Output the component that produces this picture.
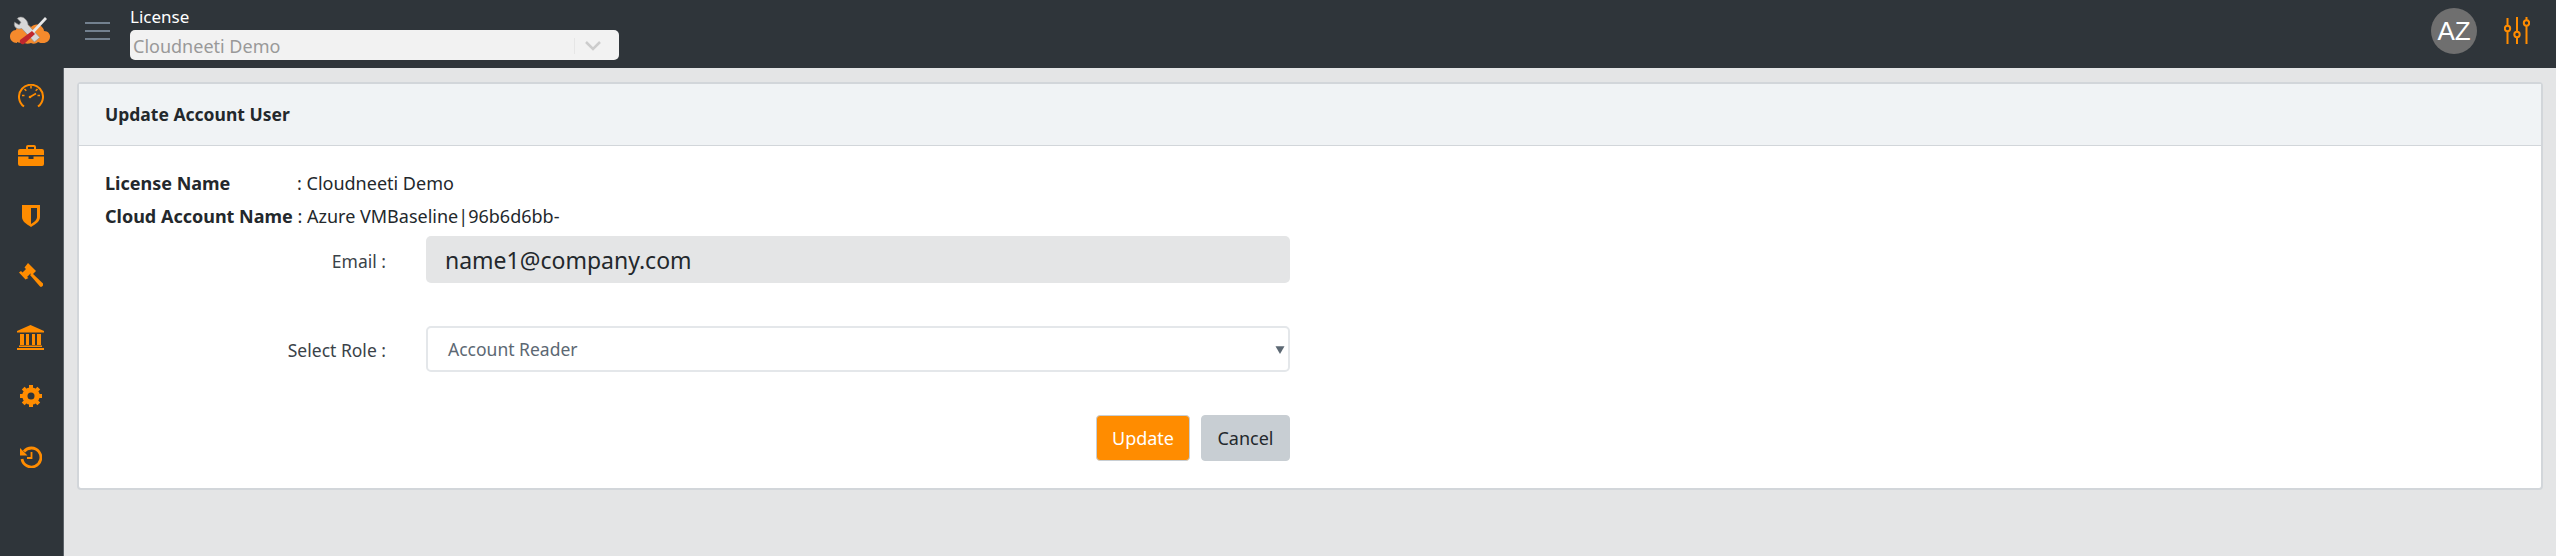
<div class="shell">
  <header class="topbar">
    <div class="brand">
      <svg width="42" height="30" viewBox="0 0 42 30">
        <path d="M8 27c-4.500 0-7-3-7-6.500S3.500 14 7 14c1-4 4-6 8-6 3 0 5 1 7 3 2-2 5-3 8-2 3 1 5 4 5 6 4 0 6 3 6 5.500 0 4-3 6.500-7 6.500-2 0-3 0-5-1-2 2-5 2-7 1-3 1-6 1-8-1-2 1-4 1-6 0z" fill="#f58a2c"/>
        <path d="M14 3c-2-1-5-1-7 1l4 4-2 3-5-3c-1 3 0 6 3 7 2 1 4 0 5 0l14 15 6-5L19 11c0-3-2-6-5-8z" fill="#d8d8d8" stroke="#8c8c8c" stroke-width=".7" transform="translate(2 -1) scale(.9)"/>
        <path d="M36 1l2 2-14 15-2-2z" fill="#e8e8e8"/>
        <path d="M23 15l3 3-11 10c-2 1-5-1-4-4z" fill="#c0272d"/>
      </svg>
    </div>
    <button class="burger" aria-label="Toggle menu"><span></span><span></span><span></span></button>
    <div class="license">
      <div class="license-label">License</div>
      <div class="license-select">
        <span>Cloudneeti Demo</span>
        <i class="sep"></i>
        <svg width="20" height="12" viewBox="0 0 20 12"><path d="M3 2l7 7 7-7" fill="none" stroke="#ccc" stroke-width="2.500"/></svg>
      </div>
    </div>
    <div class="top-right">
      <div class="avatar">AZ</div>
      <svg class="sliders" width="26" height="28" viewBox="0 0 26 28" fill="none" stroke="#ff8c00" stroke-width="2">
        <path d="M3.500 1v8M3.500 14v13M13 0v15M13 20v7M22.500 0v3M22.500 9v18"/>
        <circle cx="3.500" cy="11.500" r="2.700"/>
        <circle cx="13" cy="17.500" r="2.700"/>
        <circle cx="22.500" cy="6" r="2.700"/>
      </svg>
    </div>
  </header>

  <div class="below">
    <nav class="sidebar">
      <svg width="26" height="24" viewBox="0 0 26 24" fill="none" stroke="#ff8c00" stroke-width="2">
        <path d="M6 22.500A12 12 0 1 1 20 22.500"/>
        <path d="M13 2v2.500M4 11.500h2.500M22 11.500h-2.500M6.500 5l1.800 1.800M19.500 5l-1.800 1.800" stroke-width="1.500"/>
        <path d="M12 13l6-3.500" stroke-width="1.800"/>
        <circle cx="12" cy="13" r="1.300" fill="#ff8c00" stroke="none"/>
      </svg>
      <svg width="26" height="21" viewBox="0 0 26 21" fill="#ff8c00">
        <path d="M8 4V2a2 2 0 0 1 2-2h6a2 2 0 0 1 2 2v2h6a2 2 0 0 1 2 2v4H0V6a2 2 0 0 1 2-2zm2 0h6V2h-6z" fill-rule="evenodd"/>
        <path d="M0 11.500h10.500V14h5v-2.500H26V19a2 2 0 0 1-2 2H2a2 2 0 0 1-2-2z"/>
      </svg>
      <svg class="shield" width="18" height="22" viewBox="0 0 18 22">
        <path d="M0 0h18v12c0 4-4 7-9 10-5-3-9-6-9-10z" fill="#ff8c00"/>
        <path d="M9 3h6v9c0 3-3 5-6 7z" fill="#2f353a"/>
      </svg>
      <svg width="25" height="25" viewBox="0 0 25 25" fill="#ff8c00">
        <path d="M9 0l8 8-4 4-1.500-1.500-3.500 3.500L9.500 15l-3 1.500L0 9.500 2 8l1.500 1.500L7 6 5.500 4.500z" transform="translate(1 0)"/>
        <path d="M12 12l2-2 11 10.500c.6.600.6 1.400 0 2l-1 1c-.6.600-1.400.6-2 0z"/>
      </svg>
      <svg width="27" height="25" viewBox="0 0 27 25" fill="#ff8c00">
        <path d="M13.500 0L27 6v1.500H0V6z"/>
        <path d="M3 9h4v11H3zM9 9h3v11H9zM15 9h3v11h-3zM20 9h4v11h-4z"/>
        <path d="M2 20.500h23V22H2zM0 23h27v2H0z"/>
      </svg>
      <svg class="cog" width="22" height="22" viewBox="0 0 22 22">
        <circle cx="11" cy="11" r="6.500" fill="none" stroke="#ff8c00" stroke-width="4.500"/>
        <path d="M11 0v22M0 11h22M3.200 3.200l15.600 15.600M18.800 3.200L3.200 18.800" stroke="#ff8c00" stroke-width="4"/>
        <circle cx="11" cy="11" r="3.500" fill="#2f353a"/>
      </svg>
      <svg class="history" width="22" height="22" viewBox="0 0 22 22" fill="none" stroke="#ff8c00" stroke-width="2.800">
        <path d="M4 5.500A9.500 9.500 0 1 1 2 13"/>
        <path d="M0 2l0 7.500h7.500z" fill="#ff8c00" stroke="none"/>
        <path d="M11.500 6v6H7" stroke-width="1.800"/>
      </svg>
    </nav>

    <main class="content">
      <section class="card">
        <div class="card-header">Update Account User</div>
        <div class="card-body">
          <div class="meta"><b class="meta-name">License Name</b><span>: Cloudneeti Demo</span></div>
          <div class="meta"><b>Cloud Account Name</b><span>&nbsp;: Azure VMBaseline|96b6d6bb-</span></div>

          <div class="form">
            <label for="email">Email :</label>
            <div class="input" id="email">name1@company.com</div>
            <label for="role" class="role-label">Select Role :</label>
            <div class="select role-field" id="role">
              <span>Account Reader</span>
              <svg width="10" height="9" viewBox="0 0 8 8"><path d="M0 1h8L4 8z" fill="#5c6873"/></svg>
            </div>
            <div class="actions">
              <button class="btn update">Update</button>
              <button class="btn cancel">Cancel</button>
            </div>
          </div>
        </div>
      </section>
    </main>
  </div>
</div>

<style>
  :global(body) {
    margin: 0;
    background: #e4e5e6;
    font-family: "Noto Sans", "Open Sans", sans-serif;
    color: #23282c;
  }

  .shell {
    width: 2556px;
    height: 556px;
    display: flex;
    flex-direction: column;
    overflow: hidden;
  }

  .topbar {
    height: 68px;
    background: #2f353a;
    display: flex;
    align-items: flex-start;
    flex: none;
  }

  .brand {
    width: 85px;
    padding: 16px 0 0 9px;
    box-sizing: border-box;
  }

  .burger {
    width: 25px;
    height: 18px;
    margin-top: 22px;
    padding: 0;
    border: 0;
    background: none;
    display: flex;
    flex-direction: column;
    justify-content: space-between;
  }

  .burger span {
    height: 2px;
    background: #73818f;
  }

  .license {
    margin-left: 20px;
    padding-top: 6px;
  }

  .license-label {
    color: #fff;
    font-size: 17px;
    line-height: 22px;
    height: 24px;
  }

  .license-select {
    width: 489px;
    height: 30px;
    background: #f2f2f2;
    border-radius: 5px;
    display: flex;
    align-items: center;
    font-size: 18px;
    color: #999;
    padding: 2px 0 0 3px;
    box-sizing: border-box;
  }

  .license-select span {
    flex: 1;
  }

  .sep {
    width: 1px;
    height: 16px;
    background: #e6e6e6;
    margin-right: 8px;
  }

  .license-select svg {
    margin-right: 16px;
  }

  .top-right {
    margin-left: auto;
    display: flex;
    align-items: center;
    gap: 27px;
    padding: 8px 26px 0 0;
  }

  .avatar {
    width: 46px;
    height: 46px;
    border-radius: 50%;
    background: #6f6f6f;
    color: #fff;
    font: 26px/46px "Liberation Sans", sans-serif;
    text-align: center;
  }

  .below {
    flex: 1;
    display: flex;
  }

  .sidebar {
    width: 61px;
    flex: none;
    background: #2f353a;
    border-right: 1px solid #5c6268;
    display: flex;
    flex-direction: column;
    align-items: center;
    gap: 37px;
    padding: 16px 2px 0 0;
  }

  .shield {
    margin: 2px 0 -1px;
  }

  .cog {
    margin-top: -2px;
  }

  .history {
    margin-top: 2px;
  }

  .content {
    flex: 1;
    padding: 14px 13px 0 13px;
  }

  .card {
    height: 408px;
    box-sizing: border-box;
    background: #fff;
    border: 2px solid #d2d6da;
    border-radius: 4px;
  }

  .card-header {
    height: 62px;
    box-sizing: border-box;
    background: #f0f3f5;
    border-bottom: 1px solid #d2d6da;
    padding-left: 26px;
    font-size: 17.500px;
    font-weight: 700;
    line-height: 60px;
  }

  .card-body {
    padding: 24px 0 0 26px;
    font-size: 17.500px;
  }

  .meta {
    display: flex;
    font-size: 18px;
    line-height: 26px;
    height: 33px;
  }

  .meta-name {
    width: 192px;
  }

  .form {
    display: grid;
    grid-template-columns: 281px 864px;
    column-gap: 40px;
    color: #3a4248;
  }

  label {
    text-align: right;
    align-self: center;
    padding-top: 2px;
  }

  .input {
    height: 47px;
    background: #e4e5e6;
    border-radius: 5px;
    font-size: 23px;
    line-height: 49px;
    padding-left: 19px;
    box-sizing: border-box;
    color: #23282c;
  }

  .select {
    height: 46px;
    border: 2px solid #e4e7ea;
    border-radius: 5px;
    box-sizing: border-box;
    color: #5c6873;
    padding: 0 3px 0 20px;
    display: flex;
    align-items: center;
    justify-content: space-between;
  }

  .role-label,
  .role-field {
    margin-top: 43px;
  }

  .actions {
    grid-column: 2;
    margin-top: 43px;
    display: flex;
    justify-content: flex-end;
    gap: 11px;
  }

  .btn {
    height: 46px;
    border-radius: 4px;
    font: inherit;
    font-size: 18px;
    padding: 0;
  }

  .update {
    width: 94px;
    background: #ff8c00;
    color: #fff;
    border: 1px solid #c8ced3;
  }

  .cancel {
    width: 89px;
    background: #c8ced3;
    color: #23282c;
    border: 1px solid #c8ced3;
  }
</style>
